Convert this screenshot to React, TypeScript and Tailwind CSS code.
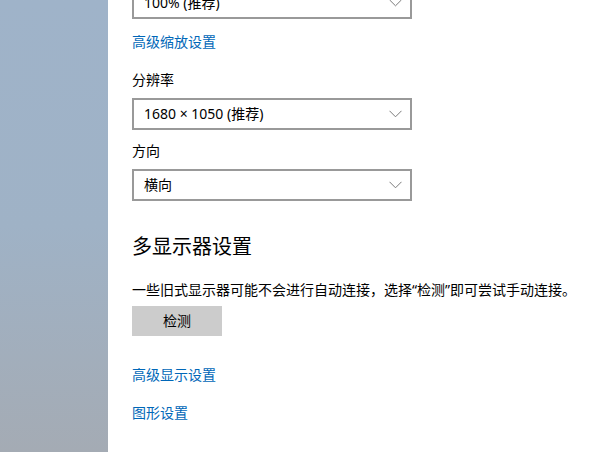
import React from "react";

const font = "font-['Noto_Sans','Noto_Sans_CJK_SC',sans-serif]";

function Chevron() {
  return (
    <svg width="13" height="8" viewBox="0 0 13 8" fill="none">
      <path d="M0.5 0.8 L6.5 6.8 L12.5 0.8" stroke="#7a7a7a" strokeWidth="1" />
    </svg>
  );
}

function Dropdown({ value, className = "" }: { value: string; className?: string }) {
  return (
    <div
      className={`flex h-[32px] w-[280px] items-center justify-between border-2 border-[#999999] bg-white pl-[10px] pr-[8px] text-[14px] leading-[20px] text-black ${className}`}
    >
      <span>{value}</span>
      <Chevron />
    </div>
  );
}

function Link({ children, className = "" }: { children: React.ReactNode; className?: string }) {
  return (
    <div className={`h-[20px] text-[14px] leading-[20px] text-[#0067b8] ${className}`}>
      {children}
    </div>
  );
}

export default function App() {
  return (
    <div className={`flex h-[452px] w-[602px] overflow-hidden bg-white ${font}`}>
      {/* 桌面背景一角 */}
      <div className="h-full w-[108px] shrink-0 bg-gradient-to-b from-[#9fb3c9] via-[#9fb2c6] to-[#a4abb4]" />

      <div className="flex flex-col pl-[24px]">
        <Dropdown value="100% (推荐)" className="mt-[-13px]" />
        <Link className="mt-[13px]">高级缩放设置</Link>

        <div className="mt-[18px] h-[20px] text-[14px] leading-[20px] text-black">分辨率</div>
        <Dropdown value="1680 × 1050 (推荐)" className="mt-[8px]" />

        <div className="mt-[11px] h-[20px] text-[14px] leading-[20px] text-black">方向</div>
        <Dropdown value="横向" className="mt-[8px]" />

        <div className="mt-[32px] h-[28px] text-[20px] leading-[28px] text-black">多显示器设置</div>
        <div className="mt-[19px] h-[20px] whitespace-nowrap text-[14px] leading-[20px] text-black">
          一些旧式显示器可能不会进行自动连接，选择“检测”即可尝试手动连接。
        </div>
        <button className="mt-[6px] h-[30px] w-[90px] bg-[#cccccc] text-[14px] leading-[20px] text-black">
          检测
        </button>

        <Link className="mt-[29px]">高级显示设置</Link>
        <Link className="mt-[18px]">图形设置</Link>
      </div>
    </div>
  );
}
